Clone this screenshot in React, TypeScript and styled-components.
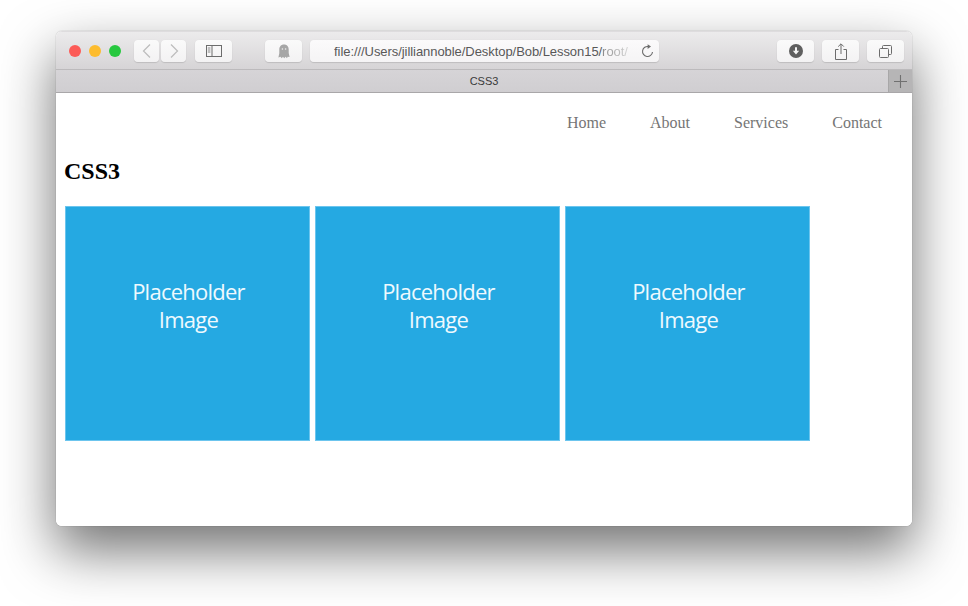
import React from "react";
import styled, { createGlobalStyle } from "styled-components";

const GlobalStyle = createGlobalStyle`
  html, body {
    margin: 0;
    padding: 0;
    background: #fff;
  }
`;

const Page = styled.div`
  width: 968px;
  height: 606px;
  padding: 31px 56px 0;
  box-sizing: border-box;
  overflow: hidden;
  background: #fff;
`;

const Window = styled.div`
  width: 856px;
  height: 495px;
  display: flex;
  flex-direction: column;
  border-radius: 6px;
  overflow: hidden;
  background: #fff;
`;

const WindowShadow = styled.div`
  width: 856px;
  height: 495px;
  border-radius: 6px;
  box-shadow: 0 24px 54px 1px rgba(0, 0, 0, 0.55), 0 0 1px rgba(0, 0, 0, 0.5);
`;

const Toolbar = styled.div`
  height: 38px;
  flex: none;
  display: flex;
  align-items: center;
  padding: 1px 8px 0 13px;
  box-sizing: border-box;
  background: linear-gradient(#ecebec, #d6d4d6);
  border-top: 1px solid #dedcde;
`;

const Lights = styled.div`
  display: flex;
  gap: 8px;
  margin-right: 13px;
`;

const Light = styled.span<{ $color: string }>`
  width: 12px;
  height: 12px;
  border-radius: 50%;
  background: ${(p) => p.$color};
`;

const ToolButton = styled.div<{ $width?: number; $gap?: number }>`
  width: ${(p) => p.$width ?? 37}px;
  height: 22px;
  margin-right: ${(p) => p.$gap ?? 0}px;
  flex: none;
  display: flex;
  align-items: center;
  justify-content: center;
  background: linear-gradient(#fafafa, #f3f2f3);
  border-radius: 4px;
  box-shadow: 0 1px 1px rgba(0, 0, 0, 0.12), 0 0 1px rgba(0, 0, 0, 0.08);
`;

const AddressBar = styled.div`
  width: 349px;
  height: 22px;
  flex: none;
  margin-right: 118px;
  padding: 0 5px 0 24px;
  box-sizing: border-box;
  display: flex;
  align-items: center;
  justify-content: space-between;
  background: linear-gradient(#fbfafb, #f5f4f5);
  border-radius: 4px;
  box-shadow: 0 1px 1px rgba(0, 0, 0, 0.12), 0 0 1px rgba(0, 0, 0, 0.08);
`;

const Url = styled.span`
  width: 296px;
  overflow: hidden;
  white-space: nowrap;
  font: 13px "Liberation Sans", Arial, sans-serif;
  letter-spacing: -0.06px;
  color: #585858;
`;

const UrlFade = styled.span`
  color: transparent;
  background: linear-gradient(90deg, #8a8a8a, #d4d4d4);
  -webkit-background-clip: text;
  background-clip: text;
`;

const TabBar = styled.div`
  height: 24px;
  flex: none;
  display: flex;
  box-sizing: border-box;
  background: linear-gradient(#d6d4d7, #d0ced1);
  border-top: 1px solid #bcbabc;
  border-bottom: 1px solid #a9a7a9;
`;

const TabTitle = styled.div`
  flex: 1;
  padding-left: 24px;
  display: flex;
  align-items: center;
  justify-content: center;
  font: 11px "Liberation Sans", Arial, sans-serif;
  color: #3a3a3a;
`;

const NewTab = styled.div`
  width: 24px;
  flex: none;
  display: flex;
  align-items: center;
  justify-content: center;
  background: #b6b5b6;
  border-left: 1px solid #a8a7a8;
  box-sizing: border-box;
`;

const Content = styled.main`
  flex: 1;
  padding: 0 0 0 8px;
  background: #fff;
`;

const Nav = styled.nav`
  display: flex;
  justify-content: flex-end;
  gap: 44px;
  padding: 21px 30px 0 0;
`;

const NavLink = styled.a`
  font: 16px/18px "Liberation Serif", "Times New Roman", serif;
  color: #757575;
`;

const Heading = styled.h1`
  margin: 25px 0 21px;
  font: bold 24px/28px "Liberation Serif", "Times New Roman", serif;
  color: #000;
`;

const Gallery = styled.div`
  display: flex;
  gap: 5px;
  padding-left: 1px;
`;

const Placeholder = styled.div`
  width: 245px;
  height: 235px;
  box-sizing: border-box;
  padding: 0 0 38px 2px;
  display: flex;
  align-items: center;
  justify-content: center;
  text-align: center;
  background: #25a9e2;
  border: 1px solid #6cc5ee;
  font: 22px/28px "Open Sans", "Noto Sans", sans-serif;
  letter-spacing: -0.75px;
  color: #eff9fe;
`;

const Chevron = ({ flip }: { flip?: boolean }) => (
  <svg width="10" height="16" viewBox="0 0 10 16" fill="none" stroke="#bcbcbc" strokeWidth="1.2">
    <path d={flip ? "M2 1.5 8.500 8 2 14.500" : "M8 1.500 1.500 8 8 14.500"} />
  </svg>
);

const SidebarIcon = () => (
  <svg width="16" height="12" viewBox="0 0 16 12" fill="none" stroke="#6c6c6c">
    <rect x="0.5" y="0.5" width="15" height="11" />
    <path d="M6 .5v11" />
    <path d="M1.800 3h2.600M1.800 5h2.600M1.800 7h2.600" strokeWidth="0.8" />
  </svg>
);

const GhostIcon = () => (
  <svg width="12" height="15" viewBox="0 0 12 15">
    <path
      d="M6 .5C2.900.5 1.300 2.800 1.300 5.600v3.600L.4 13.600l2.100-.9 1.200 1.600L5 12.800l1.200 1.500 1.400-1.500 1.400 1.400.6-1.500 2 .4-.9-4V5.600C10.700 2.800 9.100.5 6 .5Z"
      fill="#a6a6a6"
    />
    <circle cx="4.4" cy="5" r="0.8" fill="#eee" />
    <circle cx="7.6" cy="5" r="0.8" fill="#eee" />
  </svg>
);

const ReloadIcon = () => (
  <svg width="13" height="14" viewBox="0 0 13 14" fill="none">
    <path d="M7.600 2.600A5 5 0 1 0 11.500 8" stroke="#6c6c6c" strokeWidth="1.1" />
    <path d="M6.600.2 10 2.600 6.600 5Z" fill="#6c6c6c" />
  </svg>
);

const DownloadIcon = () => (
  <svg width="14" height="14" viewBox="0 0 14 14">
    <circle cx="7" cy="7" r="7" fill="#5f5f5f" />
    <path d="M6 3.200h2v3.600h2.200L7 10.400 3.800 6.800H6Z" fill="#f6f6f6" />
  </svg>
);

const ShareIcon = () => (
  <svg width="12" height="17" viewBox="0 0 12 17" fill="none" stroke="#6c6c6c">
    <path d="M3.500 6.500H.5v10h11v-10h-3" />
    <path d="M6 11V1M3.200 3.600 6 .8l2.800 2.800" />
  </svg>
);

const TabsIcon = () => (
  <svg width="13" height="13" viewBox="0 0 13 13" fill="none" stroke="#6c6c6c">
    <rect x="0.5" y="3.5" width="9" height="9" rx="1" />
    <path d="M3.500 3.500v-2a1 1 0 0 1 1-1h7a1 1 0 0 1 1 1v7a1 1 0 0 1-1 1h-2" />
  </svg>
);

const PlusIcon = () => (
  <svg width="13" height="13" viewBox="0 0 13 13" stroke="#707070" strokeWidth="1.1">
    <path d="M6.500 0v13M0 6.500h13" />
  </svg>
);

const links = ["Home", "About", "Services", "Contact"];

export default function App() {
  return (
    <Page>
      <GlobalStyle />
      <WindowShadow>
        <Window>
          <Toolbar>
            <Lights>
              <Light $color="#fc5b57" />
              <Light $color="#fdbc2e" />
              <Light $color="#27c83f" />
            </Lights>
            <ToolButton $width={25} $gap={2}>
              <Chevron />
            </ToolButton>
            <ToolButton $width={25} $gap={9}>
              <Chevron flip />
            </ToolButton>
            <ToolButton $gap={33}>
              <SidebarIcon />
            </ToolButton>
            <ToolButton $gap={8}>
              <GhostIcon />
            </ToolButton>
            <AddressBar>
              <Url>
                file:///Users/jilliannoble/Desktop/Bob/Lesson15/<UrlFade>root/</UrlFade>
              </Url>
              <ReloadIcon />
            </AddressBar>
            <ToolButton $gap={8}>
              <DownloadIcon />
            </ToolButton>
            <ToolButton $gap={8}>
              <ShareIcon />
            </ToolButton>
            <ToolButton>
              <TabsIcon />
            </ToolButton>
          </Toolbar>
          <TabBar>
            <TabTitle>CSS3</TabTitle>
            <NewTab>
              <PlusIcon />
            </NewTab>
          </TabBar>
          <Content>
            <Nav>
              {links.map((link) => (
                <NavLink key={link}>{link}</NavLink>
              ))}
            </Nav>
            <Heading>CSS3</Heading>
            <Gallery>
              {[0, 1, 2].map((n) => (
                <Placeholder key={n}>
                  Placeholder
                  <br />
                  Image
                </Placeholder>
              ))}
            </Gallery>
          </Content>
        </Window>
      </WindowShadow>
    </Page>
  );
}
